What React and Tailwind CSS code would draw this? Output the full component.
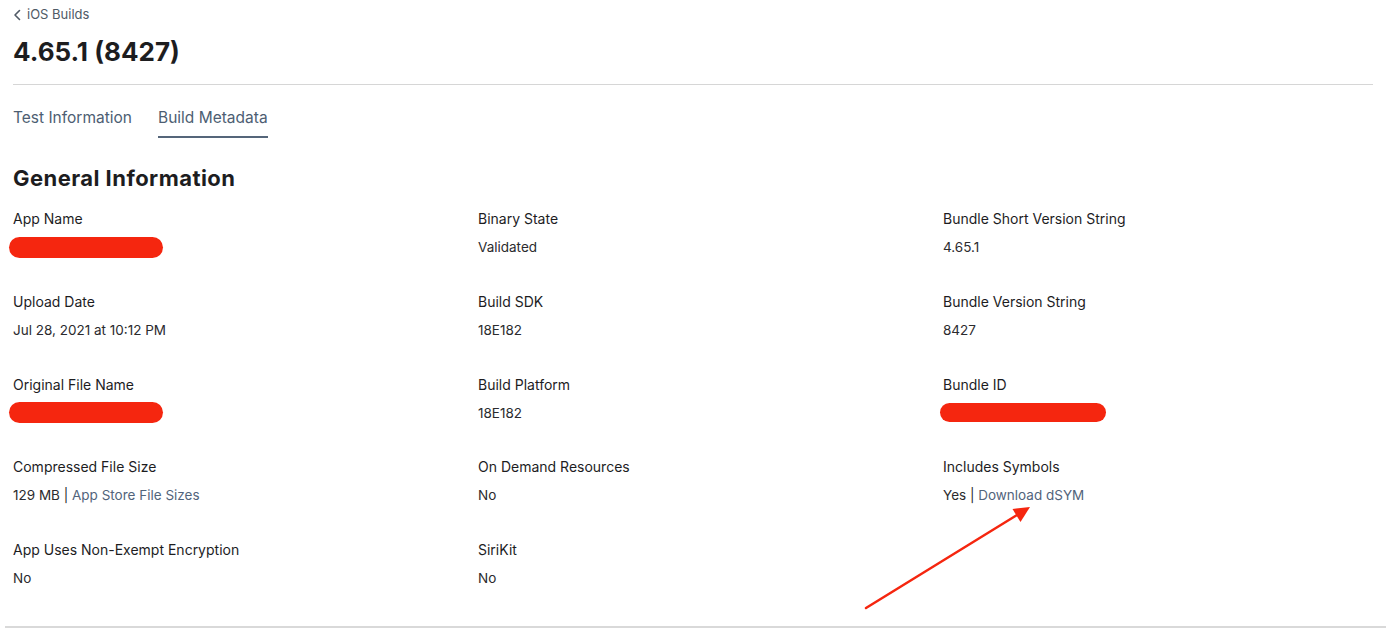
const rows = [
  [
    { label: "App Name", redact: "w-[154px] h-[21px] -ml-[4px]" },
    { label: "Binary State", value: "Validated" },
    { label: "Bundle Short Version String", value: "4.65.1" },
  ],
  [
    { label: "Upload Date", value: "Jul 28, 2021 at 10:12 PM" },
    { label: "Build SDK", value: "18E182" },
    { label: "Bundle Version String", value: "8427" },
  ],
  [
    { label: "Original File Name", redact: "w-[154px] h-[21px] -ml-[4px]" },
    { label: "Build Platform", value: "18E182" },
    { label: "Bundle ID", redact: "w-[166px] h-[19px] -ml-[3px]" },
  ],
  [
    { label: "Compressed File Size", value: "129 MB", link: "App Store File Sizes" },
    { label: "On Demand Resources", value: "No" },
    { label: "Includes Symbols", value: "Yes", link: "Download dSYM" },
  ],
  [
    { label: "App Uses Non-Exempt Encryption", value: "No" },
    { label: "SiriKit", value: "No" },
    null,
  ],
];

function Field({ item }) {
  if (!item) return <div />;
  return (
    <div className="flex flex-col">
      <div className="text-[14px] leading-[20px] text-[#1d1d1f]">{item.label}</div>
      <div className="mt-2 h-[20px] flex items-center text-[13.5px] leading-[20px] text-[#2b2b2e]">
        {item.redact ? (
          <div className={`${item.redact} rounded-full bg-[#f5260f]`} />
        ) : (
          <span>
            {item.value}
            {item.link && (
              <>
                {" | "}
                <span className="text-[#52647b]">{item.link}</span>
              </>
            )}
          </span>
        )}
      </div>
    </div>
  );
}

export default function App() {
  return (
    <div
      className="relative w-[1400px] h-[642px] bg-white overflow-hidden"
      style={{ fontFamily: "Inter, 'Open Sans', sans-serif" }}
    >
      <div className="px-[13px] pt-[6px] w-[1386px]">
        {/* breadcrumb */}
        <div className="flex items-center gap-[5px] h-[18px] text-[13px] text-[#505a66]">
          <svg width="9" height="12" viewBox="0 0 9 12" fill="none">
            <path d="M6.5 1.5 2 6l4.5 4.5" stroke="#505a66" strokeWidth="1.6" strokeLinecap="round" strokeLinejoin="round" />
          </svg>
          <span>iOS Builds</span>
        </div>

        <h1 className="mt-[12px] text-[26px] leading-[32px] font-bold text-[#1d1d1f]">
          4.65.1 (8427)
        </h1>

        <div className="mt-[16px] border-t border-[#d6d6d6]" />

        {/* tabs */}
        <div className="mt-[21px] flex gap-[26px] text-[15.5px] leading-[24px] text-[#4d5e72]">
          <div className="pb-[6px]">Test Information</div>
          <div className="pb-[6px] border-b-2 border-[#55667a]">Build Metadata</div>
        </div>

        <h2 className="mt-[26px] text-[22px] leading-[28px] font-bold text-[#1d1d1f] tracking-[0.45px]">
          General Information
        </h2>

        <div className="mt-[17px] grid grid-cols-[465px_465px_1fr]">
          {rows.map((row, i) =>
            row.map((item, j) => (
              <div key={`${i}-${j}`} className="h-[82.75px]">
                <Field item={item} />
              </div>
            ))
          )}
        </div>
      </div>

      <div className="mt-[3px] ml-[5px] w-[1381px] border-t-2 border-[#d9d9d9]" />

      {/* annotation arrow */}
      <svg className="absolute left-0 top-0 pointer-events-none" width="1400" height="642">
        <line x1="866" y1="608" x2="1017" y2="515" stroke="#f5260f" strokeWidth="2.5" strokeLinecap="round" />
        <polygon points="1030,507 1020.5,522 1012.5,509" fill="#f5260f" />
      </svg>
    </div>
  );
}
